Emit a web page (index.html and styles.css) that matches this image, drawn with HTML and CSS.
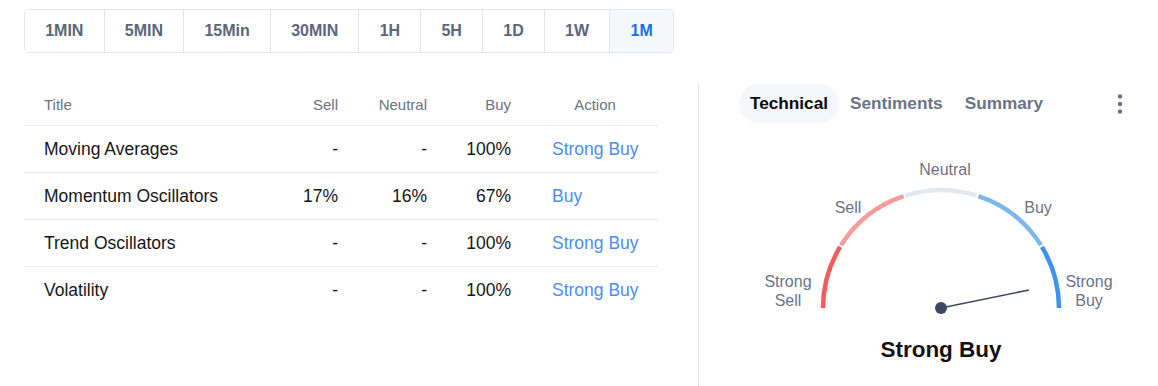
FILE: index.html
```html
<!DOCTYPE html>
<html lang="en">
<head>
  <meta charset="UTF-8">
  <title>Technical Analysis</title>
  <link rel="stylesheet" href="styles.css">
</head>
<body>
  <div class="page">
    <div class="periods">
      <button class="period" type="button">1MIN</button>
      <button class="period" type="button">5MIN</button>
      <button class="period" type="button">15Min</button>
      <button class="period" type="button">30MIN</button>
      <button class="period" type="button">1H</button>
      <button class="period" type="button">5H</button>
      <button class="period" type="button">1D</button>
      <button class="period" type="button">1W</button>
      <button class="period active" type="button">1M</button>
    </div>

    <div class="main">
      <div class="summary-table">
        <table>
          <thead>
            <tr>
              <th class="col-title">Title</th>
              <th class="col-num col-sell">Sell</th>
              <th class="col-num col-neutral">Neutral</th>
              <th class="col-num col-buy">Buy</th>
              <th class="col-action">Action</th>
            </tr>
          </thead>
          <tbody>
            <tr>
              <td class="col-title">Moving Averages</td>
              <td class="col-num">-</td>
              <td class="col-num">-</td>
              <td class="col-num">100%</td>
              <td class="col-action"><a href="#">Strong Buy</a></td>
            </tr>
            <tr>
              <td class="col-title">Momentum Oscillators</td>
              <td class="col-num">17%</td>
              <td class="col-num">16%</td>
              <td class="col-num">67%</td>
              <td class="col-action"><a href="#">Buy</a></td>
            </tr>
            <tr>
              <td class="col-title">Trend Oscillators</td>
              <td class="col-num">-</td>
              <td class="col-num">-</td>
              <td class="col-num">100%</td>
              <td class="col-action"><a href="#">Strong Buy</a></td>
            </tr>
            <tr>
              <td class="col-title">Volatility</td>
              <td class="col-num">-</td>
              <td class="col-num">-</td>
              <td class="col-num">100%</td>
              <td class="col-action"><a href="#">Strong Buy</a></td>
            </tr>
          </tbody>
        </table>
      </div>

      <div class="gauge-panel">
        <div class="gauge-tabs">
          <span class="gauge-tab active">Technical</span>
          <span class="gauge-tab">Sentiments</span>
          <span class="gauge-tab">Summary</span>
          <button class="kebab" type="button" aria-label="More">
            <svg width="6" height="20" viewBox="0 0 6 20">
              <circle cx="3" cy="2.5" r="2.2"/>
              <circle cx="3" cy="10" r="2.2"/>
              <circle cx="3" cy="17.5" r="2.2"/>
            </svg>
          </button>
        </div>

        <!-- Стрілочний індикатор -->
        <svg class="gauge" width="404" height="170" viewBox="0 0 404 170">
          <g class="arc" fill="none" stroke-width="4.5">
            <path d="M84 158 A118 118 0 0 1 101.1 96.9" stroke="#f45b5b"/>
            <path d="M102.1 95.1 A118 118 0 0 1 164.6 46.1" stroke="#f89b9b"/>
            <path d="M166.5 45.5 A118 118 0 0 1 237.5 45.5" stroke="#e3e8f0"/>
            <path d="M239.4 46.1 A118 118 0 0 1 301.9 95.1" stroke="#7db8ec"/>
            <path d="M302.9 96.9 A118 118 0 0 1 320 158" stroke="#3d92f2"/>
          </g>
          <g class="labels">
            <text x="206" y="25">Neutral</text>
            <text x="109" y="63">Sell</text>
            <text x="299" y="63">Buy</text>
            <text x="49" y="137">Strong</text>
            <text x="49" y="156">Sell</text>
            <text x="350" y="137">Strong</text>
            <text x="350" y="156">Buy</text>
          </g>
          <line x1="202" y1="158" x2="290" y2="140" class="needle"/>
          <circle cx="202" cy="158" r="6" class="hub"/>
        </svg>

        <div class="verdict">Strong Buy</div>
      </div>
    </div>
  </div>
</body>
</html>
```

FILE: styles.css
```css
body {
  margin: 0;
  background: #fff;
  font-family: "Liberation Sans", Arial, sans-serif;
  color: #1b1b1b;
}
.page {
  padding: 9px 0 0 24px;
  height: 377px;
  display: flex;
  flex-direction: column;
}

/* Періоди */
.periods {
  display: inline-flex;
  align-self: flex-start;
  height: 44px;
  border: 1px solid #e2e6ee;
  border-radius: 5px;
  box-sizing: border-box;
  overflow: hidden;
}
.period {
  font-family: inherit;
  font-size: 16px;
  font-weight: bold;
  color: #5c6679;
  background: #fff;
  border: none;
  border-left: 1px solid #e2e6ee;
  padding: 0 20.2px;
  margin: 0;
  cursor: pointer;
}
.period:first-child { border-left: none; }
.period.active {
  color: #1572e8;
  background: #f5f7fb;
}

.main {
  display: flex;
  flex: 1;
  margin-top: 31px;
}

/* Таблиця */
.summary-table {
  flex: 0 0 634px;
  margin-right: 40px;
}
table {
  width: 100%;
  border-collapse: collapse;
  table-layout: fixed;
}
th, td {
  padding: 0;
  white-space: nowrap;
}
th {
  height: 41px;
  font-size: 15px;
  font-weight: normal;
  color: #6b7282;
  border-bottom: 1px solid #e6e9f0;
}
td {
  height: 46px;
  font-size: 17.5px;
  color: #161616;
  border-bottom: 1px solid #e6e9f0;
}
tbody tr:last-child td { border-bottom: none; }
.col-title {
  width: 226px;
  padding-left: 20px;
  text-align: left;
}
.col-num { text-align: right; }
.col-sell { width: 68px; }
.col-neutral { width: 89px; }
.col-buy { width: 84px; }
.col-action {
  padding: 0 20px 0 41px;
  text-align: left;
}
th.col-action { text-align: center; }
.col-action a {
  color: #4c8df6;
  text-decoration: none;
}

/* Права панель */
.gauge-panel {
  flex: 1;
  min-width: 0;
  border-left: 1px solid #e2e8f0;
  padding: 0 15px 0 40px;
  display: flex;
  flex-direction: column;
}
.gauge-tabs {
  display: flex;
  align-items: center;
  height: 39px;
}
.gauge-tab {
  font-size: 17.2px;
  font-weight: bold;
  color: #6b7386;
  padding: 0 11px;
  line-height: 39px;
  border-radius: 20px;
}
.gauge-tab.active {
  color: #0b0b0b;
  background: #f5f7fb;
}
.kebab {
  margin-left: auto;
  width: 46px;
  height: 39px;
  border: none;
  background: none;
  padding: 0;
  cursor: pointer;
  display: flex;
  align-items: center;
  justify-content: center;
}
.kebab svg { fill: #6b7386; }

.gauge {
  display: block;
  flex-shrink: 0;
  margin-top: 27px;
}
.labels text {
  font-family: "Liberation Sans", Arial, sans-serif;
  font-size: 16px;
  fill: #6b7386;
  text-anchor: middle;
}
.needle {
  stroke: #3f4862;
  stroke-width: 1.6;
}
.hub { fill: #3f4862; }

.verdict {
  margin-top: 17px;
  width: 404px;
  text-align: center;
  font-size: 22.5px;
  font-weight: bold;
  color: #111;
}
```
